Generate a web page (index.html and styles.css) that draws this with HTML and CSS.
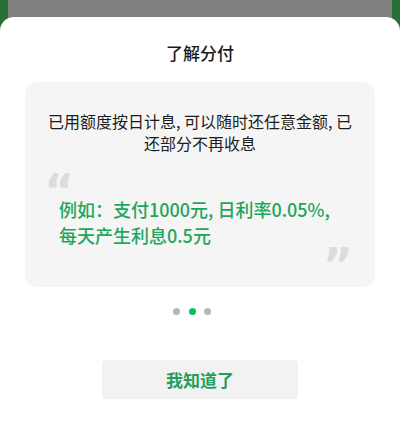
FILE: index.html
```html
<!DOCTYPE html>
<html lang="zh-CN">
<head>
<meta charset="utf-8">
<title>了解分付</title>
<link rel="stylesheet" href="styles.css">
</head>
<body>
<div class="backdrop">
  <div class="edge"></div>
  <div class="shade"></div>
  <div class="edge"></div>
</div>
<div class="sheet">
  <h1 class="title">了解分付</h1>
  <div class="card">
    <p class="desc">已用额度按日计息, 可以随时还任意金额, 已<br>还部分不再收息</p>
    <div class="quote quote-open">“</div>
    <p class="example">例如：支付1000元, 日利率0.05%,<br>每天产生利息0.5元</p>
    <div class="quote quote-close">”</div>
  </div>
  <div class="dots">
    <span class="dot"></span>
    <span class="dot dot-active"></span>
    <span class="dot"></span>
    <span class="dot dot-hidden"></span>
  </div>
  <div class="actions">
    <button class="btn">我知道了</button>
  </div>
</div>
</body>
</html>
```
FILE: styles.css
```css
html, body {
  margin: 0;
  padding: 0;
  background: #ffffff;
  font-family: "Noto Sans CJK SC", "Noto Sans", sans-serif;
}

.backdrop {
  display: flex;
  height: 30px;
  margin-bottom: -13px;
}

.edge {
  width: 8px;
  background: #286f38;
}

.shade {
  flex: 1;
  background: #7f7f7f;
}

.sheet {
  position: relative;
  background: #ffffff;
  border-radius: 14px 14px 0 0;
  padding: 24px 0 40px;
}

.title {
  margin: 0;
  text-align: center;
  font-size: 17px;
  line-height: 24px;
  font-weight: 500;
  color: #1a1a1a;
}

.card {
  margin: 17px 25px 0;
  height: 205px;
  box-sizing: border-box;
  background: #f5f5f5;
  border-radius: 12px;
  padding: 28px 22px 0;
}

.desc {
  margin: 0;
  text-align: center;
  white-space: nowrap;
  font-size: 16px;
  line-height: 22px;
  color: #1c1c1c;
}

.quote {
  font-family: "DejaVu Sans", sans-serif;
  font-weight: bold;
  font-size: 46px;
  line-height: 46px;
  color: #dcdcdc;
  height: 28px;
  overflow: visible;
}

.quote-open {
  margin-top: 14px;
  margin-left: -3px;
}

.quote-close {
  text-align: right;
  margin-top: -6px;
  margin-right: 0;
}

.example {
  margin: 0 0 0 12px;
  white-space: nowrap;
  font-size: 18px;
  line-height: 26px;
  font-weight: 500;
  color: #1ea65d;
}

.dots {
  display: flex;
  justify-content: center;
  gap: 8.5px;
  margin-top: 21px;
}

.dot {
  width: 7px;
  height: 7px;
  border-radius: 50%;
  background: #b6b6b6;
}

.dot-active {
  background: #07c160;
}

.dot-hidden {
  visibility: hidden;
}

.actions {
  display: flex;
  justify-content: center;
  margin-top: 45px;
}

.btn {
  width: 196px;
  height: 39px;
  border: none;
  border-radius: 4px;
  background: #f2f2f2;
  color: #1f9f5b;
  font-family: "Noto Sans CJK SC", "Noto Sans", sans-serif;
  font-size: 17px;
  font-weight: bold;
  padding: 0;
}
```
